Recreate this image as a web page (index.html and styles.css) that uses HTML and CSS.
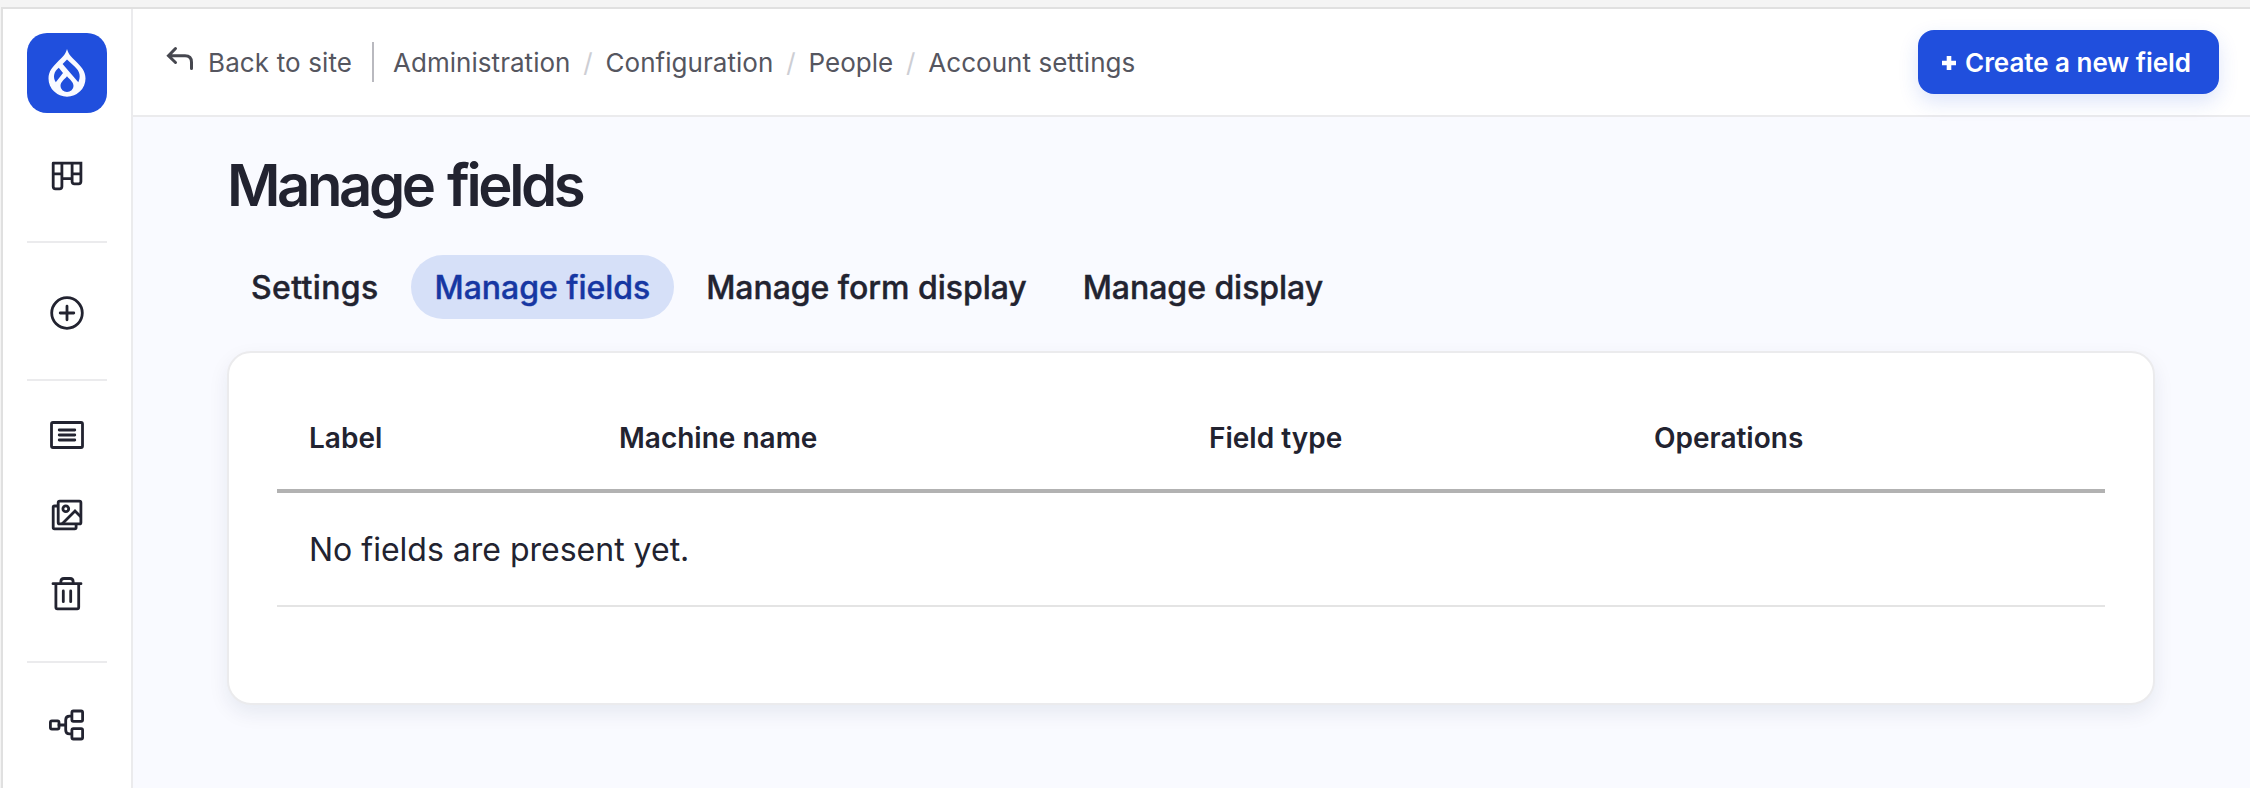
FILE: index.html
```html
<!DOCTYPE html>
<html lang="en">
<head>
<meta charset="utf-8">
<title>Manage fields</title>
<link rel="stylesheet" href="styles.css">
</head>
<body>
<div class="app">
  <nav class="sidebar">
    <a class="logo"><svg width="80" height="80" viewBox="27 33 80 80"><path fill="#f9faff" fill-rule="evenodd" d="M67 49C68.500 55 72.500 58 77 62.500C81.500 67 85.500 71.500 85.500 78.500A18.500 18.200 0 0 1 48.500 78.500C48.500 71.500 52.500 67 57 62.500C61.500 58 65.500 55 67 49ZM67 59.500L62.600 64L78.300 82.200C80.800 77 80.200 71.500 74.600 66.500ZM58.800 67.800C54 71.500 52.500 77 55.800 82.300L63 73ZM67 76.300C64.500 79.500 60.500 81.800 60.500 86A6.500 6 0 0 0 73.500 86C73.500 81.800 69.500 79.500 67 76.300Z"/></svg></a>
    <svg class="icon icon-blocks" viewBox="47 156 40 40"><path d="M53.200 163.200H80.900V181.500Q80.900 183.800 78.500 183.800H74.500Q72.100 183.800 72.100 181.500V163.200M61.900 163.200V186.500Q61.900 188.800 59.500 188.800H55.500Q53.200 188.800 53.200 186.500V163.200M53.200 173.900H61.900M72.100 173.900H80.900M61.900 178.700H72.100"/></svg>
    <hr>
    <svg class="icon icon-create" viewBox="47 293 40 40"><circle cx="67" cy="313" r="15.300"/><path d="M67 306.200V319.800M60.200 313H73.800"/></svg>
    <hr>
    <svg class="icon icon-content" viewBox="47 415 40 40"><rect x="51.500" y="422.500" width="31" height="25" rx="1.500"/><path d="M59.200 430H74.800M59.200 435H74.800M59.200 440H74.800"/></svg>
    <svg class="icon icon-media" viewBox="47 495 40 40"><rect x="58.200" y="501.200" width="22.700" height="22.700" rx="1.500"/><path d="M57.500 506H54.500Q53.200 506 53.200 507.300V527.500Q53.200 528.900 54.500 528.900H74.700Q76.100 528.900 76.100 527.500V524.500M62.500 523.500L75 511L80.500 516.500"/><circle cx="65.800" cy="508.700" r="2.900"/></svg>
    <svg class="icon icon-trash" viewBox="47 573 40 40"><path d="M53 583.700H81M60.800 583.500V582Q60.800 578.500 64 578.500H70Q73.200 578.500 73.200 582V583.500M55.900 584V607.300Q55.900 608.800 57.400 608.800H77.200Q78.700 608.800 78.700 607.300V584M63.300 591V601.700M70.700 591V601.700"/></svg>
    <hr>
    <svg class="icon icon-tree" viewBox="47 705 40 40"><rect x="50.400" y="720.900" width="8.600" height="8.200" rx="1.500"/><rect x="71.900" y="711" width="10.700" height="10.300" rx="1.500"/><rect x="71.900" y="728.700" width="10.700" height="10.300" rx="1.500"/><path d="M59 725H65.700M71.500 716.100H69.500Q65.700 716.100 65.700 720V730Q65.700 733.900 69.500 733.900H71.500"/></svg>
  </nav>
  <div class="page">
    <header class="topbar">
      <a class="back"><svg class="back-icon" viewBox="165 43 30 30"><path d="M175.500 48.500L168.500 55.800L175.500 62.500M169 55.800H185Q191.500 55.800 191.500 62.300V68.500"/></svg><span class="back-text">Back to site</span></a>
      <ol class="crumbs">
        <li>Administration</li><li>Configuration</li><li>People</li><li>Account settings</li>
      </ol>
      <a class="button"><svg class="plus" width="14" height="14" viewBox="0 0 14 14"><path d="M7 0V14M0 7H14"/></svg><span class="button-text">Create a new field</span></a>
    </header>
    <main>
      <h1>Manage fields</h1>
      <ul class="tabs"><li class="first">Settings</li><li class="active">Manage fields</li><li>Manage form display</li><li>Manage display</li></ul>
      <section class="card">
        <table>
          <colgroup><col class="w1"><col class="w2"><col class="w3"><col></colgroup>
          <thead><tr><th>Label</th><th>Machine name</th><th>Field type</th><th>Operations</th></tr></thead>
          <tbody><tr><td colspan="4">No fields are present yet.</td></tr></tbody>
        </table>
      </section>
    </main>
  </div>
</div>
</body>
</html>
```
FILE: styles.css
```css
* { box-sizing: border-box; }
body {
  margin: 0;
  height: 788px;
  overflow: hidden;
  padding: 7px 0 0 1px;
  background: #f4f4f4;
  color: #222330;
  font-family: Inter, "Liberation Sans", sans-serif;
}
.app {
  display: flex;
  height: 781px;
  border-top: 2px solid #e0e0e0;
  border-left: 2px solid #e0e0e0;
  background: #fff;
}
.sidebar {
  display: flex;
  flex-direction: column;
  align-items: flex-start;
  flex: 0 0 130px;
  padding: 24px 0 0 24px;
  border-right: 2px solid #ebebed;
}
.logo {
  display: block;
  width: 80px;
  height: 80px;
  border-radius: 20px;
  background: #204fdd;
}
.logo svg { display: block; }
.sidebar hr { flex: none; width: 80px; height: 2px; margin: 0; border: 0; background: #ebebed; }
.icon {
  flex: none;
  width: 40px;
  height: 40px;
  margin-left: 20px;
  fill: none;
  stroke: #222330;
  stroke-width: 2.8;
  stroke-linecap: round;
}
.icon-blocks { margin-top: 43px; margin-bottom: 45px; }
.icon-create { margin-top: 50px; margin-bottom: 46px; }
.icon-content { margin-top: 34px; }
.icon-media { margin-top: 40px; }
.icon-trash { margin-top: 38px; margin-bottom: 48px; }
.icon-tree { margin-top: 42px; }
.page { flex: 1; min-width: 0; background: #f9faff; }
.topbar {
  display: flex;
  height: 108px;
  border-bottom: 2px solid #ebebed;
  background: #fff;
  color: #55565f;
  font-size: 26px;
  line-height: 42px;
  white-space: nowrap;
}
.back { display: flex; margin: 33px 0 0 32px; width: 209px; height: 40px; border-right: 2px solid #b9b9bf; }
.back-icon { flex: none; width: 30px; height: 30px; margin-top: 1px; fill: none; stroke: #46474f; stroke-width: 3; stroke-linecap: round; }
.back-text { margin-left: 13px; letter-spacing: .12px; }
.crumbs { display: flex; margin: 33px 0 0 19px; padding: 0; list-style: none; letter-spacing: .04px; }
.crumbs li + li::before { content: "/"; margin: 0 12.8px; color: #cdced4; }
.button {
  display: flex;
  align-items: center;
  width: 301px;
  height: 64px;
  margin: 21px 31px 0 auto;
  padding-left: 24px;
  border-radius: 16px;
  background: #204fdd;
  box-shadow: 0 8px 20px rgba(32, 79, 221, .15);
  color: #fff;
  font-weight: 600;
}
.button-text { padding-top: 2px; letter-spacing: -.03px; }
.plus { margin: 2px 9px 0 0; stroke: #fff; stroke-width: 4.6; }
main { padding: 36px 95px 0 94px; }
h1 { margin: 0; font-size: 58px; line-height: 64px; font-weight: 600; letter-spacing: -3.4px; word-spacing: 3px; }
.tabs { display: flex; gap: 8px; margin: 38px 0 32px; padding: 0; list-style: none; font-size: 32px; font-weight: 500; line-height: 66px; white-space: nowrap; letter-spacing: -.04px; -webkit-text-stroke: .4px; }
.tabs li { height: 64px; padding: 0 24px; border-radius: 32px; }
.tabs .first { letter-spacing: .35px; }
.tabs .active { background: #d6e0f8; color: #1637a3; }
.card {
  height: 354px;
  padding: 48px 48px 0;
  border: 2px solid #ebebed;
  border-radius: 24px;
  background: #fff;
  box-shadow: 0 8px 20px rgba(0, 32, 80, .08);
}
table { width: 1828px; table-layout: fixed; border-collapse: separate; border-spacing: 0; text-align: left; }
.w1 { width: 310px; }
.w2 { width: 590px; }
.w3 { width: 445px; }
th, td { padding: 0 32px; }
th { height: 92px; padding-bottom: 14px; border-bottom: 4px solid #b2b2b2; font-size: 28px; font-weight: 600; }
td { height: 114px; border-bottom: 2px solid #e4e4e4; font-size: 32px; }
```
